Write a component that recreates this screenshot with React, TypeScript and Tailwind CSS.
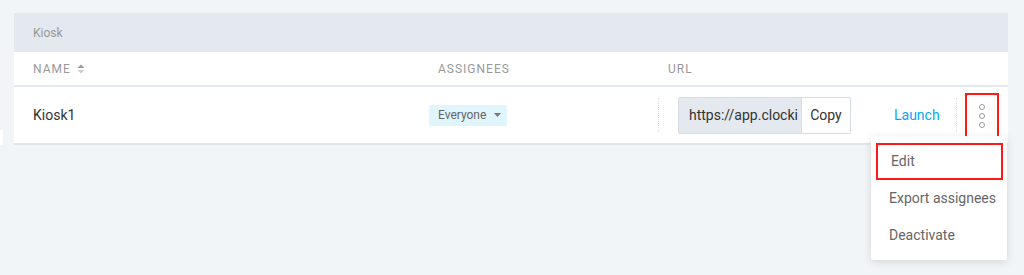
import React from 'react';

function SortIcon() {
  return (
    <svg width="8" height="10" viewBox="0 0 8 10" className="ml-[6px]">
      <path d="M4 0.5 L7.5 4 L0.5 4 Z" fill="#999" />
      <path d="M4 9.5 L7.5 6 L0.5 6 Z" fill="#ccc" />
    </svg>
  );
}

function Dots() {
  return (
    <div className="flex flex-col items-center gap-[3px]">
      {[0, 1, 2].map(i => (
        <div key={i} className="w-[6px] h-[6px] rounded-full border border-[#999]" />
      ))}
    </div>
  );
}

export default function App() {
  const menu = ['Edit', 'Export assignees', 'Deactivate'];

  return (
    <div className="relative w-[1024px] h-[275px] bg-[#f2f5f8] pt-[13px] pl-[14px] overflow-hidden" style={{ fontFamily: 'Roboto, "Liberation Sans", sans-serif' }}>
      {/* stray tab at left edge */}
      <div className="absolute left-0 top-[130px] w-[3px] h-[15px] bg-white" />

      <div className="w-[994px] bg-white border-b-[2px] border-[#e1e6ec]">
        {/* Group band */}
        <div className="h-[39px] bg-[#e4e8ef] flex items-center pl-[19px] text-[12px] text-[#999]">
          Kiosk
        </div>

        {/* Column headers */}
        <div className="h-[35px] flex items-center border-b-[2px] border-[#e4e8ef] text-[12px] text-[#999] tracking-[1px]">
          <div className="w-[415px] pl-[19px] flex items-center">
            NAME <SortIcon />
          </div>
          <div className="w-[229px] pl-[9px]">ASSIGNEES</div>
          <div className="pl-[10px]">URL</div>
        </div>

        {/* Row */}
        <div className="h-[56px] flex items-center">
          <div className="w-[415px] pl-[19px] text-[14px] text-[#333]">Kiosk1</div>
          <div className="w-[229px] flex items-center">
            <div className="h-[21px] w-[78px] bg-[#e1f5fe] rounded-[2px] flex items-center pl-[9px] text-[12px] text-[#666]">
              Everyone
              <svg width="7" height="4" viewBox="0 0 7 4" className="ml-[8px]">
                <path d="M0 0 L7 0 L3.5 4 Z" fill="#777" />
              </svg>
            </div>
          </div>
          <div className="h-[34px] border-l-[1px] border-dotted border-[#ddd]" />
          <div className="pl-[19px] flex items-center">
            <div className="h-[37px] flex border border-[#d8dde5] rounded-[2px]">
              <div className="w-[122px] bg-[#e4e8ef] flex items-center pl-[10px] text-[14px] text-[#333] overflow-hidden whitespace-nowrap">
                https://app.clocki
              </div>
              <div className="w-[49px] border-l border-[#d8dde5] flex items-center justify-center text-[14px] text-[#333]">
                Copy
              </div>
            </div>
            <div className="w-[105px] pl-[43px] text-[14px] text-[#03a9f4]">Launch</div>
            <div className="h-[34px] border-l-[1px] border-dotted border-[#ddd]" />
            <div className="ml-[8px] w-[34px] h-[45px] mt-[1px] border-[2px] border-[#ff1a1a] flex items-center justify-center">
              <Dots />
            </div>
          </div>
        </div>
      </div>

      {/* Dropdown menu */}
      <div className="absolute left-[871px] top-[136px] w-[136px] h-[124px] bg-white rounded-[2px] shadow-[0_2px_8px_rgba(0,0,0,0.12)] pt-[7px] pl-[5px] pr-[4px]">
        {menu.map((m, i) => (
          <div
            key={m}
            className={`h-[37px] flex items-center pl-[13px] text-[14px] text-[#666] whitespace-nowrap ${i === 0 ? 'border-[2px] border-[#ff1a1a] pl-[12px]' : ''}`}
          >
            {m}
          </div>
        ))}
      </div>
    </div>
  );
}
